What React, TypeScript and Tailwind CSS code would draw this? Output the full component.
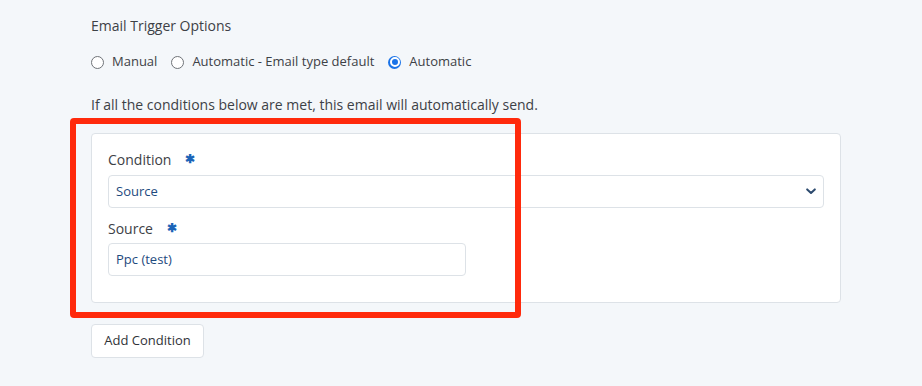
import { useState } from "react";

const font = { fontFamily: '"Open Sans", "Liberation Sans", sans-serif' };

function Radio({ label, checked, onClick }: { label: string; checked: boolean; onClick: () => void }) {
  return (
    <button type="button" onClick={onClick} className="flex items-center gap-[8px] text-[13px] text-[#3d4146]">
      {checked ? (
        <span className="w-[13px] h-[13px] rounded-full bg-[#1a73e8] flex items-center justify-center">
          <span className="w-[10px] h-[10px] rounded-full border-[2px] border-white bg-[#1a73e8]" />
        </span>
      ) : (
        <span className="w-[13px] h-[13px] rounded-full border border-[#6f7378] bg-white" />
      )}
      <span>{label}</span>
    </button>
  );
}

function Asterisk() {
  return <span className="ml-[14px] text-[#1c64b8] text-[12px] font-bold leading-none">✱</span>;
}

export default function App() {
  const [mode, setMode] = useState("auto");

  return (
    <div className="min-h-screen bg-[#f4f7fa] relative" style={font}>
      <div className="pl-[91px] pt-[16px]">
        <h2 className="text-[14px] leading-[20px] text-[#3d4146]">Email Trigger Options</h2>

        <div className="mt-[16px] h-[20px] flex items-center gap-[14px]">
          <Radio label="Manual" checked={mode === "manual"} onClick={() => setMode("manual")} />
          <Radio label="Automatic - Email type default" checked={mode === "default"} onClick={() => setMode("default")} />
          <Radio label="Automatic" checked={mode === "auto"} onClick={() => setMode("auto")} />
        </div>

        <p className="mt-[23px] text-[14px] leading-[20px] text-[#3d4146]">
          If all the conditions below are met, this email will automatically send.
        </p>

        <div className="mt-[18px] w-[750px] h-[170px] bg-white border border-[#dde2e7] rounded-[4px] pl-[16px] pr-[16px] pt-[15px]">
          <label className="flex items-center h-[20px] text-[14px] text-[#3d4146]">
            Condition
            <Asterisk />
          </label>
          <div className="mt-[6px] h-[33px] border border-[#dde2e7] rounded-[4px] flex items-center justify-between pl-[7px] pr-[6px]">
            <span className="text-[13px] text-[#1e4a7e]">Source</span>
            <svg width="10" height="7" viewBox="0 0 10 7" className="mr-[1px]">
              <path d="M1.2 1.4 L5 5 L8.8 1.4" stroke="#2c4a6e" strokeWidth="2" fill="none" strokeLinecap="round" strokeLinejoin="round" />
            </svg>
          </div>

          <label className="mt-[10px] flex items-center h-[20px] text-[14px] text-[#3d4146]">
            Source
            <Asterisk />
          </label>
          <div className="mt-[5px] w-[358px] h-[33px] border border-[#dde2e7] rounded-[4px] flex items-center pl-[7px]">
            <span className="text-[13px] text-[#1e4a7e]">Ppc (test)</span>
          </div>
        </div>

        <button
          type="button"
          className="mt-[21px] w-[113px] h-[34px] bg-white border border-[#dde2e7] rounded-[4px] text-[13px] text-[#2f3338]"
        >
          Add Condition
        </button>
      </div>

      <div className="absolute left-[70px] top-[118px] w-[451px] h-[200px] border-[6px] border-[#ff2a0c] rounded-[4px] pointer-events-none" />
    </div>
  );
}
